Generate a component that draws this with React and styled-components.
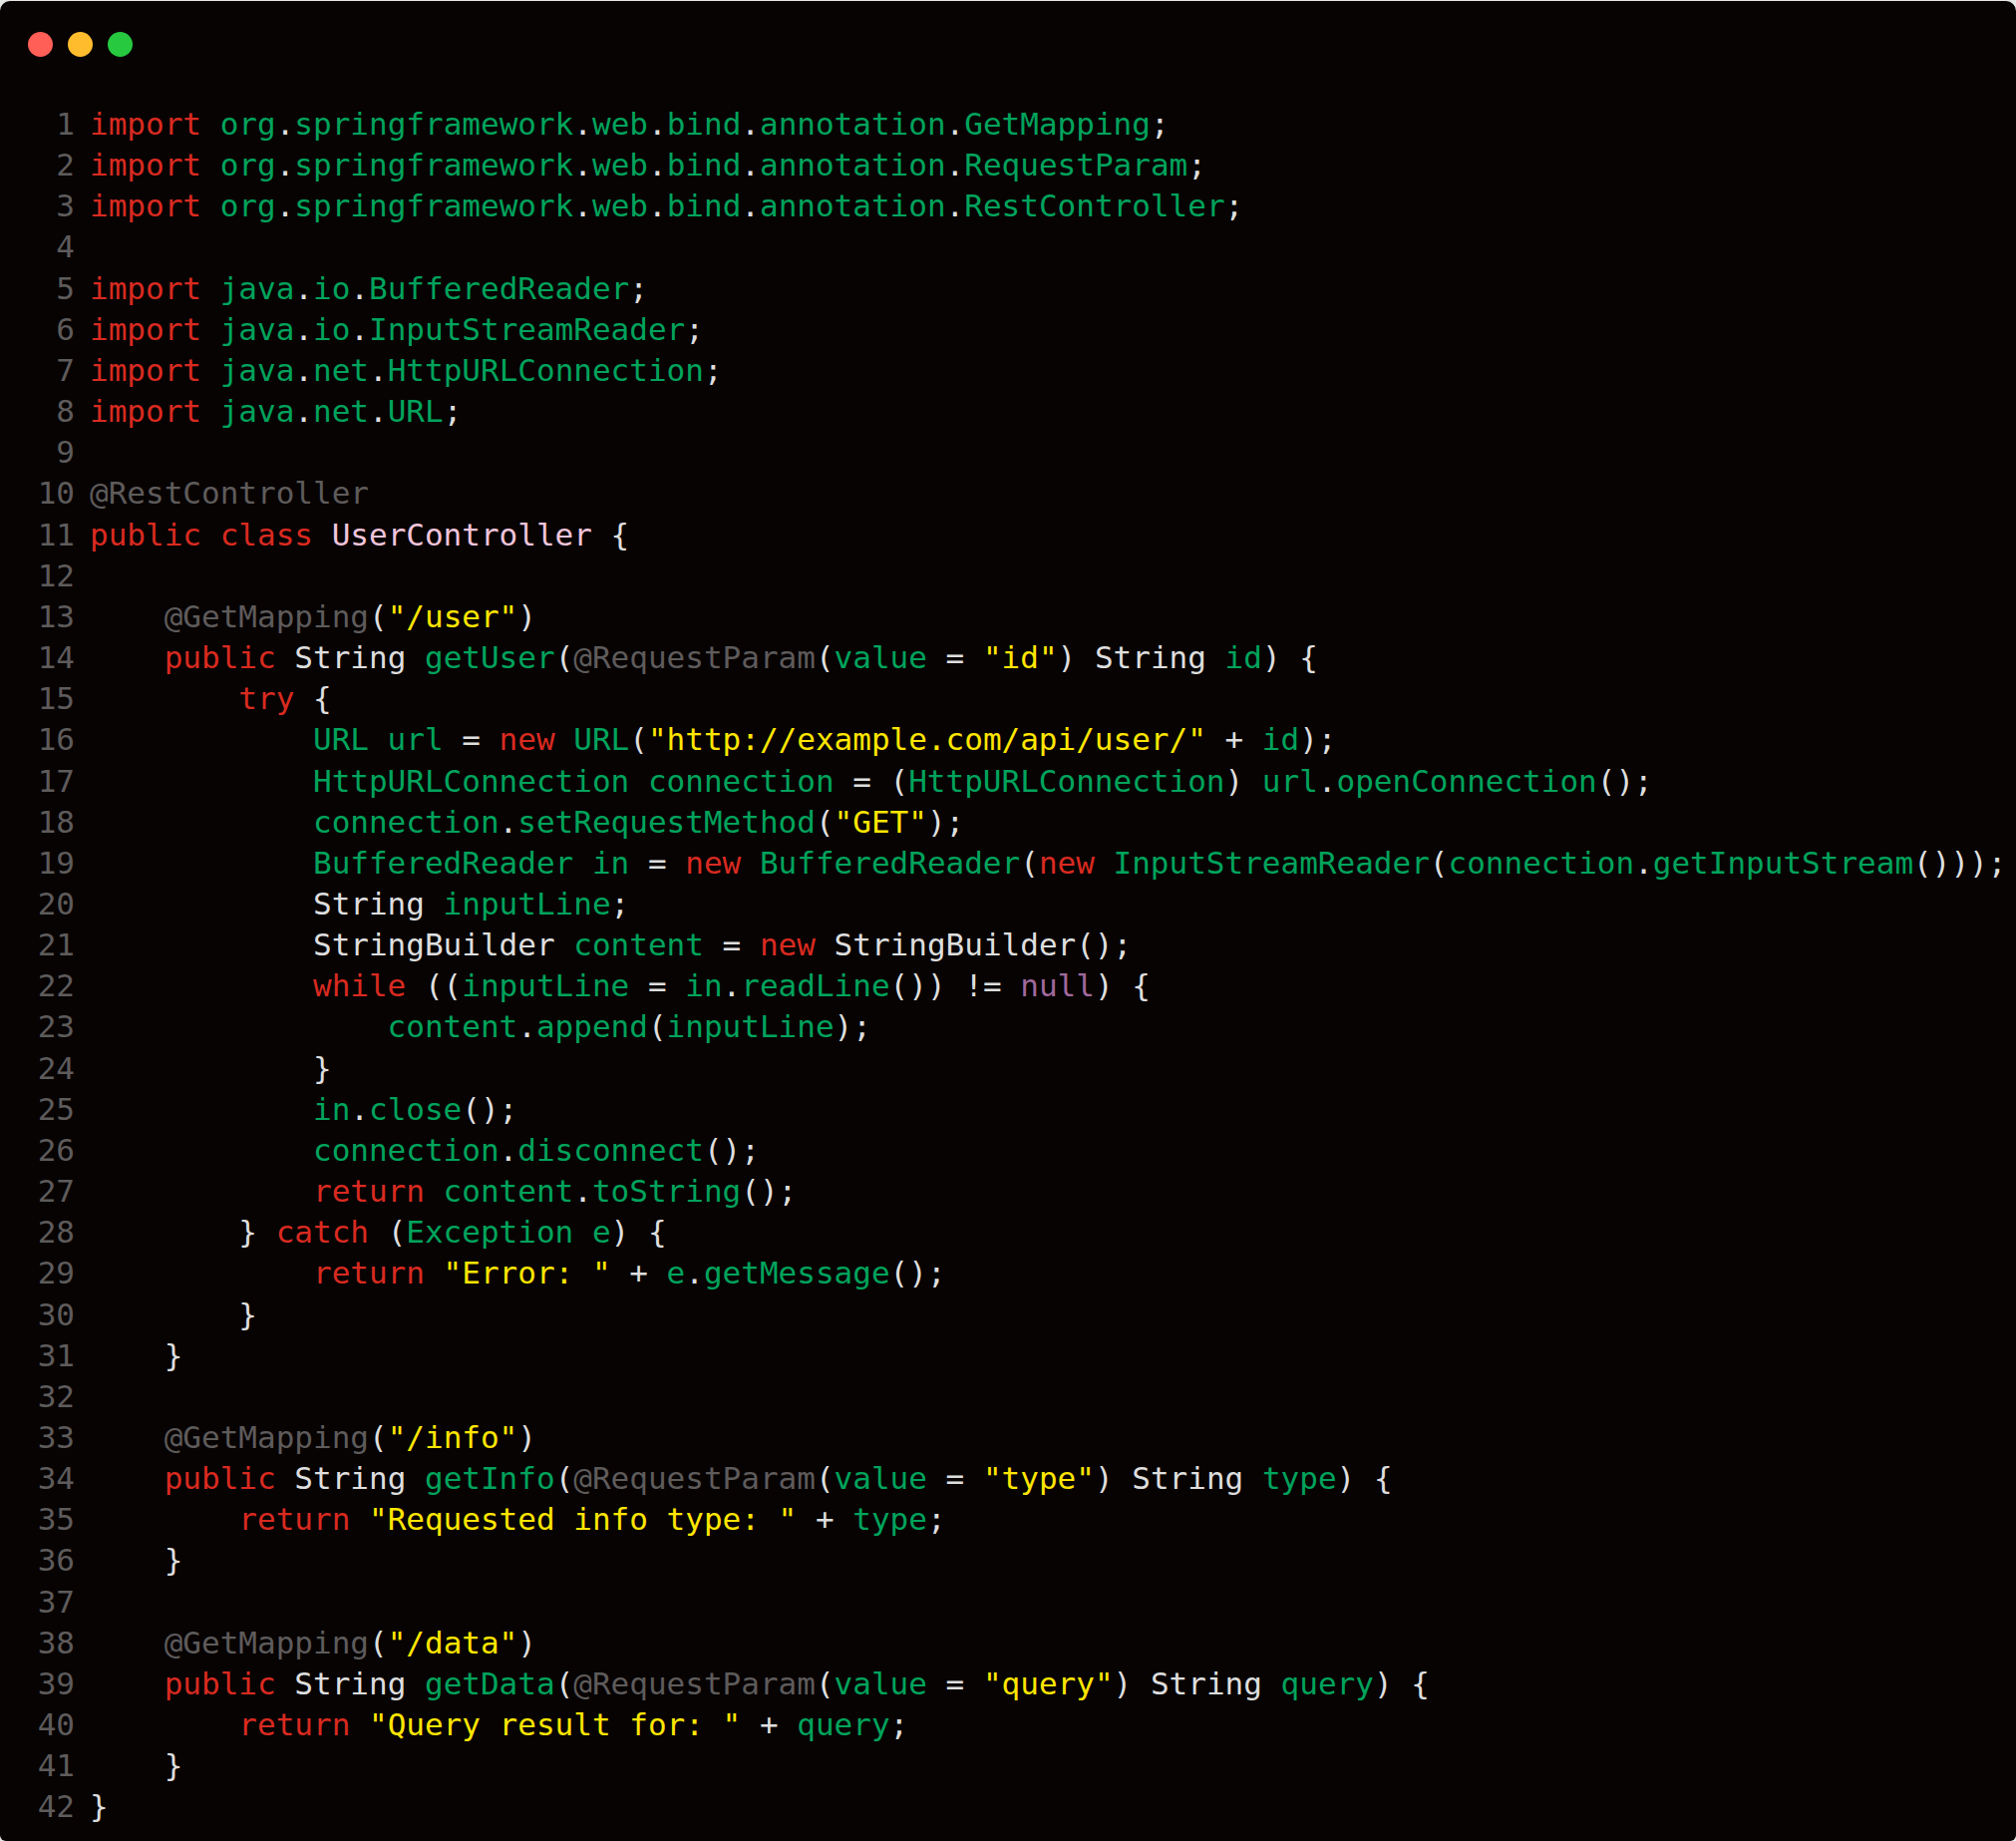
import React from "react";
import styled, { createGlobalStyle } from "styled-components";

const Global = createGlobalStyle`
  html, body { margin: 0; padding: 0; background: #e6e6e6; }
`;

const colors = {
  k: "#d92a20",
  g: "#00a35c",
  w: "#dedede",
  s: "#ffe600",
  a: "#5e5b5b",
  c: "#f0c4da",
  n: "#a0699c",
};

const Window = styled.div`
  width: 2022px; height: 1845px; margin-top: 1px; box-sizing: border-box; overflow: hidden;
  background: #070303; border-radius: 10px 10px 6px 6px; padding: 31px 0 0 28px;
  font-family: "DejaVu Sans Mono", monospace; font-size: 31px; line-height: 41.17px;
`;
const Dots = styled.div`display: flex; gap: 15px; margin-bottom: 47px;`;
const Dot = styled.span`width: 25px; height: 25px; border-radius: 50%; background: ${p => p.$color};`;
const Code = styled.div`display: flex; flex-direction: column;`;
const Row = styled.div`display: flex; height: 41.17px; white-space: pre;`;
const LineNo = styled.span`width: 47px; margin-right: 15px; text-align: right; color: ${colors.a}; flex: none;`;
const Token = styled.span`color: ${p => colors[p.$kind]};`;

const imp = (pkg, name) => [
  ["k", "import "], ...pkg.flatMap(p => [["g", p], ["w", "."]]), ["g", name], ["w", ";"],
];
const spring = ["org", "springframework", "web", "bind", "annotation"];

const lines = [
  imp(spring, "GetMapping"),
  imp(spring, "RequestParam"),
  imp(spring, "RestController"),
  [],
  imp(["java", "io"], "BufferedReader"),
  imp(["java", "io"], "InputStreamReader"),
  imp(["java", "net"], "HttpURLConnection"),
  imp(["java", "net"], "URL"),
  [],
  [["a", "@RestController"]],
  [["k", "public class "], ["c", "UserController"], ["w", " {"]],
  [],
  [["a", "    @GetMapping"], ["w", "("], ["s", "\"/user\""], ["w", ")"]],
  [["k", "    public "], ["w", "String "], ["g", "getUser"], ["w", "("], ["a", "@RequestParam"], ["w", "("], ["g", "value"], ["w", " = "], ["s", "\"id\""], ["w", ") String "], ["g", "id"], ["w", ") {"]],
  [["k", "        try "], ["w", "{"]],
  [["g", "            URL url"], ["w", " = "], ["k", "new "], ["g", "URL"], ["w", "("], ["s", "\"http://example.com/api/user/\""], ["w", " + "], ["g", "id"], ["w", ");"]],
  [["g", "            HttpURLConnection connection"], ["w", " = ("], ["g", "HttpURLConnection"], ["w", ") "], ["g", "url"], ["w", "."], ["g", "openConnection"], ["w", "();"]],
  [["g", "            connection"], ["w", "."], ["g", "setRequestMethod"], ["w", "("], ["s", "\"GET\""], ["w", ");"]],
  [["g", "            BufferedReader in"], ["w", " = "], ["k", "new "], ["g", "BufferedReader"], ["w", "("], ["k", "new "], ["g", "InputStreamReader"], ["w", "("], ["g", "connection"], ["w", "."], ["g", "getInputStream"], ["w", "()));"]],
  [["w", "            String "], ["g", "inputLine"], ["w", ";"]],
  [["w", "            StringBuilder "], ["g", "content"], ["w", " = "], ["k", "new "], ["w", "StringBuilder();"]],
  [["k", "            while "], ["w", "(("], ["g", "inputLine"], ["w", " = "], ["g", "in"], ["w", "."], ["g", "readLine"], ["w", "()) != "], ["n", "null"], ["w", ") {"]],
  [["g", "                content"], ["w", "."], ["g", "append"], ["w", "("], ["g", "inputLine"], ["w", ");"]],
  [["w", "            }"]],
  [["g", "            in"], ["w", "."], ["g", "close"], ["w", "();"]],
  [["g", "            connection"], ["w", "."], ["g", "disconnect"], ["w", "();"]],
  [["k", "            return "], ["g", "content"], ["w", "."], ["g", "toString"], ["w", "();"]],
  [["w", "        } "], ["k", "catch "], ["w", "("], ["g", "Exception e"], ["w", ") {"]],
  [["k", "            return "], ["s", "\"Error: \""], ["w", " + "], ["g", "e"], ["w", "."], ["g", "getMessage"], ["w", "();"]],
  [["w", "        }"]],
  [["w", "    }"]],
  [],
  [["a", "    @GetMapping"], ["w", "("], ["s", "\"/info\""], ["w", ")"]],
  [["k", "    public "], ["w", "String "], ["g", "getInfo"], ["w", "("], ["a", "@RequestParam"], ["w", "("], ["g", "value"], ["w", " = "], ["s", "\"type\""], ["w", ") String "], ["g", "type"], ["w", ") {"]],
  [["k", "        return "], ["s", "\"Requested info type: \""], ["w", " + "], ["g", "type"], ["w", ";"]],
  [["w", "    }"]],
  [],
  [["a", "    @GetMapping"], ["w", "("], ["s", "\"/data\""], ["w", ")"]],
  [["k", "    public "], ["w", "String "], ["g", "getData"], ["w", "("], ["a", "@RequestParam"], ["w", "("], ["g", "value"], ["w", " = "], ["s", "\"query\""], ["w", ") String "], ["g", "query"], ["w", ") {"]],
  [["k", "        return "], ["s", "\"Query result for: \""], ["w", " + "], ["g", "query"], ["w", ";"]],
  [["w", "    }"]],
  [["w", "}"]],
];

export default function App() {
  return <>
    <Global />
    <Window>
      <Dots>
        <Dot $color="#ff5f56" />
        <Dot $color="#ffbd2e" />
        <Dot $color="#27c93f" />
      </Dots>
      <Code>
        {lines.map((tokens, i) => (
          <Row key={i}>
            <LineNo>{i + 1}</LineNo>
            <span>{tokens.map(([kind, text], j) => <Token key={j} $kind={kind}>{text}</Token>)}</span>
          </Row>
        ))}
      </Code>
    </Window>
  </>;
}
